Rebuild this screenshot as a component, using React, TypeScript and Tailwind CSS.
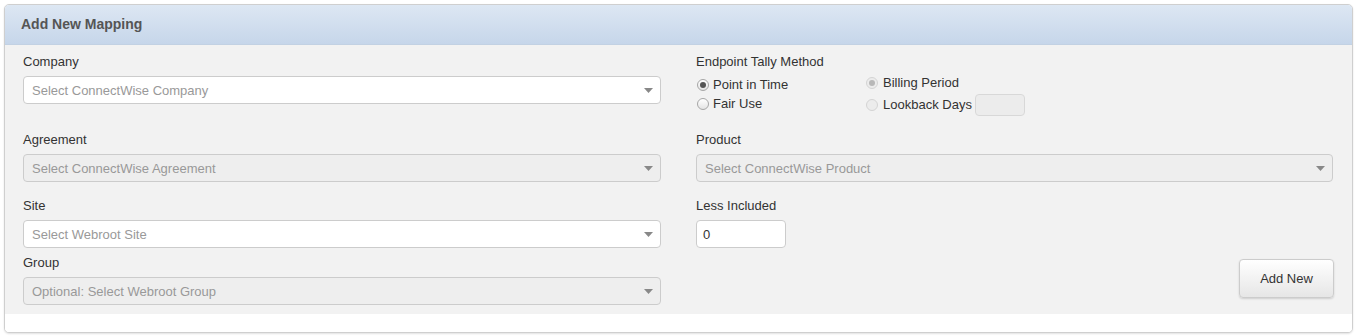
import { ReactNode } from 'react'

const font = { fontFamily: '"Liberation Sans", Arial, sans-serif' }

function Label({ children }: { children: ReactNode }) {
  return <div className="h-4 pt-px text-[13px] leading-4 text-[#333]">{children}</div>
}

function Caret() {
  return (
    <svg width="9" height="5" viewBox="0 0 9 5" className="shrink-0">
      <path d="M0 0h9L4.5 5z" fill="#888" />
    </svg>
  )
}

function Select({ text, disabled }: { text: string; disabled?: boolean }) {
  return (
    <div
      className={`mt-[7px] flex h-7 items-center justify-between rounded border border-[#ccc] pl-[8px] pr-[7px] text-[13px] text-[#999] ${
        disabled ? 'bg-[#eeeeee]' : 'bg-white'
      }`}
    >
      <span className="pt-px">{text}</span>
      <Caret />
    </div>
  )
}

function Radio({ checked, disabled }: { checked?: boolean; disabled?: boolean }) {
  return (
    <span
      className={`flex h-[12px] w-[12px] shrink-0 items-center justify-center rounded-full border ${
        disabled ? 'border-[#d4d4d4] bg-[#ececec]' : 'border-[#a6a6a6] bg-gradient-to-b from-white to-[#e4e4e4]'
      }`}
    >
      {checked ? (
        <span className={`h-[6px] w-[6px] rounded-full ${disabled ? 'bg-[#b8b8b8]' : 'bg-[#555]'}`} />
      ) : null}
    </span>
  )
}

export default function App() {
  return (
    <div className="min-h-screen bg-white p-1" style={font}>
      <div className="overflow-hidden rounded-[5px] border border-[#cfcfcf] bg-white shadow-[0_1px_2px_rgba(0,0,0,0.12)]">
        <div className="flex h-10 items-center border-b border-[#c2d1e3] bg-gradient-to-b from-[#dde7f3] to-[#c6d6ea] px-4">
          <span className="text-[14px] font-bold text-[#555]">Add New Mapping</span>
        </div>

        <div className="grid grid-cols-[638px_1fr] gap-x-[35px] bg-[#f2f2f2] pb-[9px] pl-[18px] pr-[19px] pt-[8px]">
          {/* left column */}
          <div className="flex flex-col">
            <Label>Company</Label>
            <Select text="Select ConnectWise Company" />

            <div className="mt-[27px]">
              <Label>Agreement</Label>
            </div>
            <Select text="Select ConnectWise Agreement" disabled />

            <div className="mt-[15px]">
              <Label>Site</Label>
            </div>
            <Select text="Select Webroot Site" />

            <div className="mt-[6px]">
              <Label>Group</Label>
            </div>
            <Select text="Optional: Select Webroot Group" disabled />
          </div>

          {/* right column */}
          <div className="flex flex-col">
            <Label>Endpoint Tally Method</Label>
            <div className="mt-[6px] flex text-[13px] text-[#333]">
              <div className="flex w-[170px] flex-col">
                <label className="flex h-[19px] items-center gap-[4px] pl-px">
                  <Radio checked />
                  <span>Point in Time</span>
                </label>
                <label className="flex h-[19px] items-center gap-[4px] pl-px">
                  <Radio />
                  <span>Fair Use</span>
                </label>
              </div>
              <div className="flex flex-col">
                <label className="flex h-4 items-center gap-[5px]">
                  <Radio checked disabled />
                  <span>Billing Period</span>
                </label>
                <label className="mt-[3px] flex h-[22px] items-center gap-[5px]">
                  <Radio disabled />
                  <span>Lookback Days</span>
                  <span className="-ml-[2px] h-[22px] w-[50px] rounded border border-[#d8d8d8] bg-[#ececec]" />
                </label>
              </div>
            </div>

            <div className="mt-[15px]">
              <Label>Product</Label>
            </div>
            <Select text="Select ConnectWise Product" disabled />

            <div className="mt-[15px]">
              <Label>Less Included</Label>
            </div>
            <div className="mt-[7px] flex h-7 w-[90px] items-center rounded border border-[#ccc] bg-white px-[6px] pt-px text-[13px] text-[#333]">
              0
            </div>

            <div className="mt-[11px] flex justify-end">
              <button className="-mr-px h-[39px] w-[95px] rounded border border-[#ccc] bg-gradient-to-b from-white to-[#e6e6e6] text-[13px] text-[#333] shadow-[0_1px_2px_rgba(0,0,0,0.15)]">
                Add New
              </button>
            </div>
          </div>
        </div>

        <div className="h-[18px] bg-white" />
      </div>
    </div>
  )
}
